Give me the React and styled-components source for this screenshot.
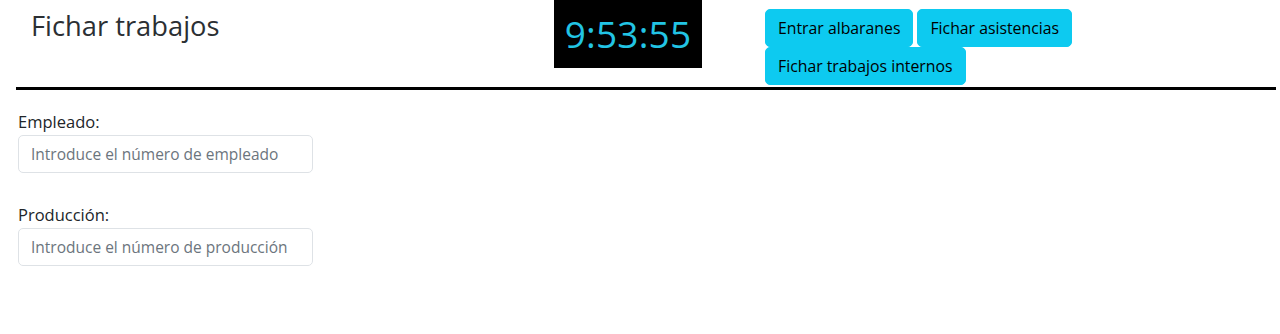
import { useEffect, useState } from 'react';
import styled, { createGlobalStyle } from 'styled-components';

const GlobalStyle = createGlobalStyle`
  * { box-sizing: border-box; }
  body {
    margin: 0;
    background: #fff;
    color: #212529;
    font-family: "Open Sans", "Noto Sans", sans-serif;
  }
`;

function Clock() {
  // fixed time so the screen matches the capture
  const [time] = useState('9:53:55');
  return <ClockBox>{time}</ClockBox>;
}

function Field({ label, placeholder }) {
  return (
    <FieldGroup>
      <Label>{label}</Label>
      <Input type="text" placeholder={placeholder} />
    </FieldGroup>
  );
}

function App() {
  useEffect(() => {
    document.title = 'Fichar trabajos';
  }, []);

  return (
    <>
      <GlobalStyle />
      <Header>
        <Title>Fichar trabajos</Title>
        <Clock />
        <ButtonWrapper>
          <Button>Entrar albaranes</Button>
          <Button>Fichar asistencias</Button>
          <Button>Fichar trabajos internos</Button>
        </ButtonWrapper>
      </Header>
      <Rule />
      <Form>
        <Field label="Empleado:" placeholder="Introduce el número de empleado" />
        <Field label="Producción:" placeholder="Introduce el número de producción" />
      </Form>
    </>
  );
}

const Header = styled.header`
display:grid;
grid-template-columns:538px 211px 320px;
align-items:start;
margin-left:16px;
height:87px;
`;

const Title = styled.h3`
margin:10px 0 0 15px;
font-size:27.3px;
font-weight:400;
line-height:1.2;
color:#2b2f33;
`;

const ClockBox = styled.div`
width:148px;
height:68px;
background:#000;
color:#22c4e4;
font-size:37px;
line-height:68px;
text-align:center;
letter-spacing:0.2px;
`;

const ButtonWrapper = styled.div`
display:flex;
flex-wrap:wrap;
column-gap:4px;
margin-top:9px;
`;

const Button = styled.button`
padding:6px 12px;
background:#0dcaf0;
border:1px solid #0dcaf0;
border-radius:5px;
color:#000;
font-family:inherit;
font-size:15.8px;
line-height:24px;
cursor:pointer;
`;

const Rule = styled.hr`
margin:0 4px 0 16px;
border:0;
border-top:3px solid #000;
opacity:1;
`;

const Form = styled.form`
display:flex;
flex-direction:column;
gap:30px;
padding:20px 0 0 18px;
`;

const FieldGroup = styled.div`
display:flex;
flex-direction:column;
gap:1px;
width:295px;
`;

const Label = styled.label`
font-size:16.5px;
line-height:24px;
color:#212529;
`;

const Input = styled.input`
height:38px;
padding:6px 12px;
border:1px solid #dee2e6;
border-radius:5px;
font-family:inherit;
font-size:15.5px;
color:#212529;

&::placeholder
{
    color:#6c757d;
}
`;

export default App;
